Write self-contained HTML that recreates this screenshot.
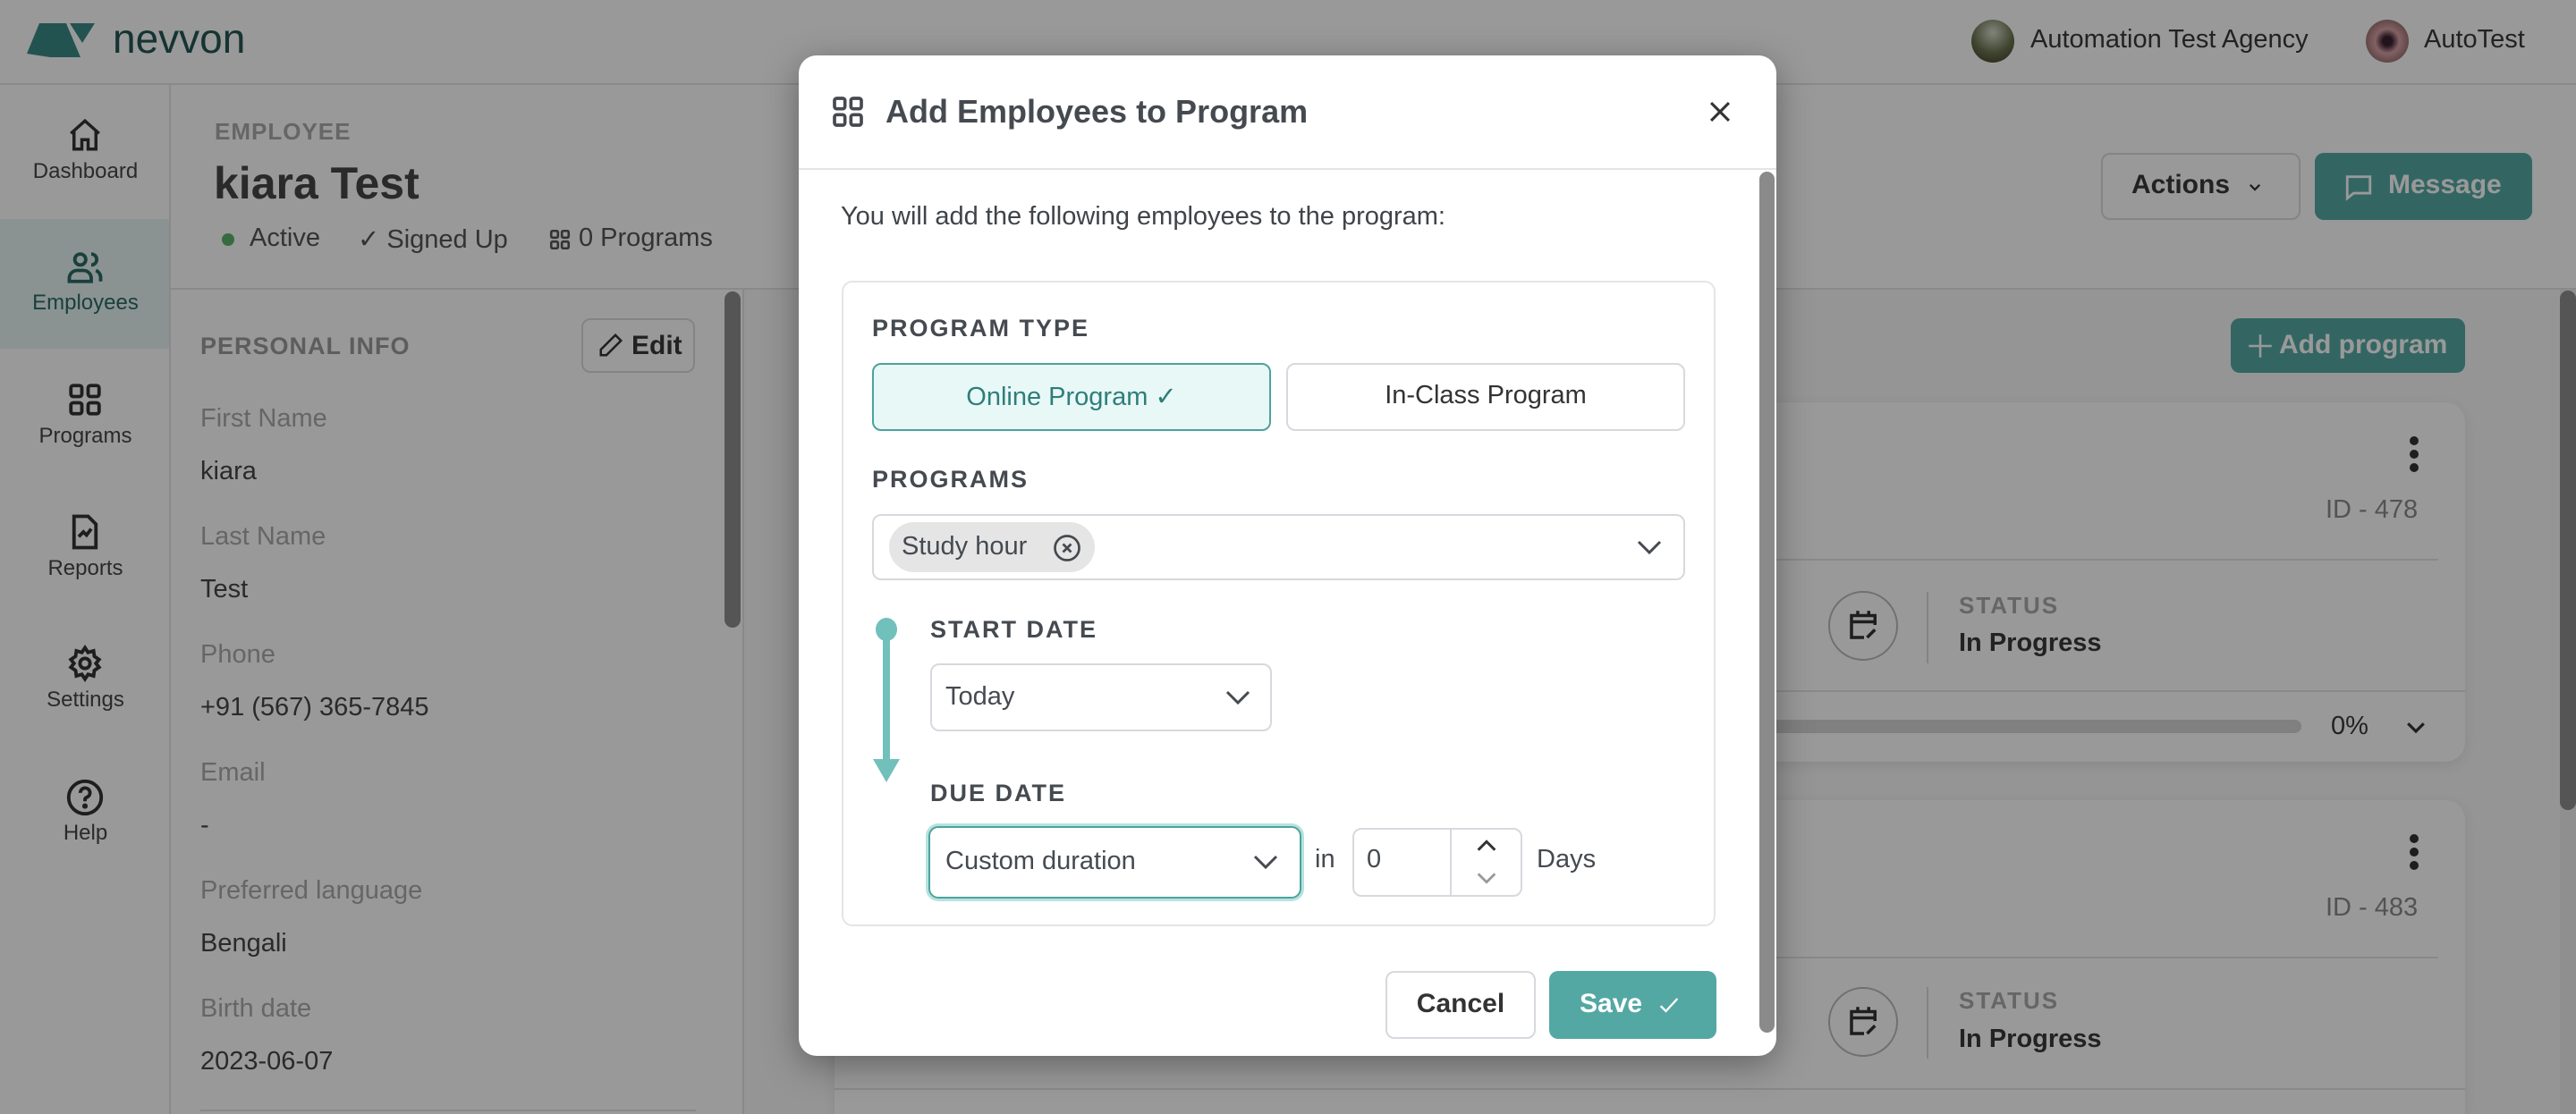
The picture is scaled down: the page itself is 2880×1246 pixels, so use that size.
<!DOCTYPE html>
<html><head><meta charset="utf-8"><style>
*{box-sizing:border-box;margin:0;padding:0}
html{width:2880px;height:1246px;overflow:hidden}
body{width:2880px;height:1246px;overflow:hidden;position:relative;font-family:"Liberation Sans",sans-serif;background:#fff;color:#464646}
.a{position:absolute;white-space:nowrap}
.hdr{left:0;top:0;width:2880px;height:95px;background:#fff;border-bottom:2px solid #e4e4e4}
.side{left:0;top:95px;width:191px;height:1151px;background:#fff;border-right:2px solid #e4e4e4}
.nav{width:191px;text-align:center;font-size:24px;color:#464646;left:0}
.lab{font-size:29px;color:#aaa;left:224px}
.val{font-size:29px;color:#464646;left:224px}
.card{left:933px;width:1823px;background:#fff;border-radius:22px;box-shadow:0 4px 14px rgba(0,0,0,.08)}
.btnb{border:2px solid #ddd;border-radius:10px;background:#fff}
.cap{font-size:27px;font-weight:bold;letter-spacing:2px;color:#454a50}
.sel{border:2px solid #d6d9dd;border-radius:10px;background:#fff}
</style></head><body>
<div class="a hdr"></div>
<svg class="a" style="left:30px;top:26px" width="82" height="40" viewBox="0 0 82 40"><path d="M14 0H44L60 38H26L0 34Z" fill="#3b8a85"/><path d="M48 0H76L62 22Z" fill="#3b8a85"/></svg>
<div class="a" style="left:126px;top:16px;font-size:46px;color:#245854">nevvon</div>
<div class="a" style="left:2204px;top:22px;width:48px;height:48px;border-radius:50%;background:radial-gradient(circle at 50% 30%,#d8dccc,#6b7350 55%,#3d3a22)"></div>
<div class="a" style="left:2270px;top:28px;font-size:29px;color:#3a3a3a">Automation Test Agency</div>
<div class="a" style="left:2645px;top:22px;width:48px;height:48px;border-radius:50%;background:radial-gradient(circle,#3a2030 15%,#d9a3a8 40%,#9a7070 75%,#5a4a40)"></div>
<div class="a" style="left:2710px;top:28px;font-size:29px;color:#3a3a3a">AutoTest</div>
<div class="a side"></div>
<div class="a" style="left:0;top:245px;width:189px;height:145px;background:#e6f5f3"></div>
<svg class="a" style="left:74px;top:130px" width="42" height="42" viewBox="0 0 24 24" fill="none" stroke="#333" stroke-width="2"><path d="M3 11L12 3l9 8M5 9v12h5v-6h4v6h5V9"/></svg>
<div class="a nav" style="top:178px">Dashboard</div>
<svg class="a" style="left:74px;top:278px" width="42" height="42" viewBox="0 0 24 24" fill="none" stroke="#2b6b67" stroke-width="2.2"><circle cx="9" cy="7" r="3.5"/><path d="M2 21v-2a5 5 0 0 1 5-5h4a5 5 0 0 1 5 5v2z"/><path d="M16 3.5a3.5 3.5 0 0 1 0 7M19 14a5 5 0 0 1 3 5v2"/></svg>
<div class="a nav" style="top:325px;color:#2b6b67">Employees</div>
<svg class="a" style="left:74px;top:426px" width="42" height="42" viewBox="0 0 24 24" fill="none" stroke="#333" stroke-width="2.2"><rect x="3" y="3" width="7" height="7" rx="1.5"/><rect x="14" y="3" width="7" height="7" rx="1.5"/><rect x="3" y="14" width="7" height="7" rx="1.5"/><rect x="14" y="14" width="7" height="7" rx="1.5"/></svg>
<div class="a nav" style="top:474px">Programs</div>
<svg class="a" style="left:74px;top:574px" width="42" height="42" viewBox="0 0 24 24" fill="none" stroke="#333" stroke-width="2.2"><path d="M5 2h9l5 5v15H5z"/><path d="M8 15l3-3 2 2 3-4"/></svg>
<div class="a nav" style="top:622px">Reports</div>
<svg class="a" style="left:74px;top:721px" width="42" height="42" viewBox="0 0 24 24" fill="none" stroke="#333" stroke-width="2.2"><circle cx="12" cy="12" r="3.2"/><path d="M12 2l2 3 3.5-1 .5 3.5 3 2-2 2.5 2 2.5-3 2-.5 3.5-3.5-1-2 3-2-3-3.5 1-.5-3.5-3-2 2-2.5-2-2.5 3-2L6.5 4 10 5z"/></svg>
<div class="a nav" style="top:769px">Settings</div>
<svg class="a" style="left:72px;top:869px" width="46" height="46" viewBox="0 0 24 24" fill="none" stroke="#333" stroke-width="2"><circle cx="12" cy="12" r="9.5"/><path d="M9.3 9.3a2.8 2.8 0 1 1 3.7 2.6c-.7.3-1 .8-1 1.5v.8"/><circle cx="12" cy="17" r=".6" fill="#333"/></svg>
<div class="a nav" style="top:918px">Help</div>
<div class="a" style="left:240px;top:132px;font-size:26px;font-weight:bold;color:#aaa;letter-spacing:1px">EMPLOYEE</div>
<div class="a" style="left:239px;top:176px;font-size:50px;font-weight:bold;color:#474747">kiara Test</div>
<div class="a" style="left:248px;top:261px;width:14px;height:14px;border-radius:50%;background:#5cb36a"></div>
<div class="a" style="left:279px;top:250px;font-size:29px;color:#555">Active</div>
<div class="a" style="left:400px;top:250px;font-size:29px;color:#555">✓ Signed Up</div>
<svg class="a" style="left:613px;top:255px" width="26" height="26" viewBox="0 0 24 24" fill="none" stroke="#555" stroke-width="2.4"><rect x="3" y="3" width="7" height="7" rx="1.5"/><rect x="14" y="3" width="7" height="7" rx="1.5"/><rect x="3" y="14" width="7" height="7" rx="1.5"/><rect x="14" y="14" width="7" height="7" rx="1.5"/></svg>
<div class="a" style="left:647px;top:250px;font-size:29px;color:#555">0 Programs</div>
<div class="a btnb" style="left:2349px;top:171px;width:223px;height:75px"></div>
<div class="a" style="left:2383px;top:190px;font-size:30px;font-weight:bold;color:#3a3a3a">Actions</div>
<svg class="a" style="left:2512px;top:200px" width="18" height="18" viewBox="0 0 24 24" fill="none" stroke="#333" stroke-width="3"><path d="M5 9l7 7 7-7"/></svg>
<div class="a" style="left:2588px;top:171px;width:243px;height:75px;background:#55aaa6;border-radius:10px"></div>
<svg class="a" style="left:2620px;top:192px" width="34" height="34" viewBox="0 0 24 24" fill="none" stroke="#fff" stroke-width="2"><path d="M3 4h18v13H8l-5 4z"/></svg>
<div class="a" style="left:2670px;top:190px;font-size:30px;font-weight:bold;color:#fff">Message</div>
<div class="a" style="left:191px;top:322px;width:2689px;height:2px;background:#e4e4e4"></div>
<div class="a" style="left:830px;top:324px;width:2px;height:922px;background:#e4e4e4"></div>
<div class="a" style="left:810px;top:326px;width:18px;height:376px;border-radius:9px;background:#8e8e8e"></div>
<div class="a" style="left:224px;top:372px;font-size:27px;font-weight:bold;color:#9c9c9c;letter-spacing:1px">PERSONAL INFO</div>
<div class="a btnb" style="left:650px;top:356px;width:127px;height:61px"></div>
<svg class="a" style="left:668px;top:371px" width="30" height="30" viewBox="0 0 24 24" fill="none" stroke="#333" stroke-width="2"><path d="M16 3l5 5L8 21H3v-5z"/></svg>
<div class="a" style="left:706px;top:370px;font-size:30px;font-weight:bold;color:#3a3a3a">Edit</div>
<div class="a lab" style="top:452px">First Name</div><div class="a val" style="top:511px">kiara</div>
<div class="a lab" style="top:584px">Last Name</div><div class="a val" style="top:643px">Test</div>
<div class="a lab" style="top:716px">Phone</div><div class="a val" style="top:775px">+91 (567) 365-7845</div>
<div class="a lab" style="top:848px">Email</div><div class="a val" style="top:907px">-</div>
<div class="a lab" style="top:980px">Preferred language</div><div class="a val" style="top:1039px">Bengali</div>
<div class="a lab" style="top:1112px">Birth date</div><div class="a val" style="top:1171px">2023-06-07</div>
<div class="a" style="left:224px;top:1241px;width:554px;height:2px;background:#e4e4e4"></div>
<div class="a" style="left:832px;top:324px;width:2030px;height:922px;background:#f8f8f8"></div>
<div class="a" style="left:2862px;top:324px;width:18px;height:922px;background:#eee"></div>
<div class="a" style="left:2862px;top:325px;width:18px;height:581px;border-radius:9px;background:#8e8e8e"></div>
<div class="a" style="left:2494px;top:356px;width:262px;height:61px;background:#55aaa6;border-radius:10px"></div>
<svg class="a" style="left:2510px;top:370px" width="34" height="34" viewBox="0 0 24 24" fill="none" stroke="#fff" stroke-width="1.8"><path d="M12 3v18M3 12h18"/></svg>
<div class="a" style="left:2548px;top:369px;font-size:30px;font-weight:bold;color:#fff">Add program</div>
<div class="a card" style="top:450px;height:402px"></div>
<div class="a" style="left:2694px;top:488px;width:10px;line-height:0">
<div style="width:10px;height:10px;border-radius:50%;background:#333;margin-bottom:5px"></div><div style="width:10px;height:10px;border-radius:50%;background:#333;margin-bottom:5px"></div><div style="width:10px;height:10px;border-radius:50%;background:#333"></div></div>
<div class="a" style="left:2600px;top:554px;font-size:29px;color:#8a8a8a">ID - 478</div>
<div class="a" style="left:933px;top:625px;width:1793px;height:2px;background:#e4e4e4"></div>
<div class="a" style="left:2044px;top:661px;width:78px;height:78px;border-radius:50%;border:2px solid #bbb"></div>
<svg class="a" style="left:2063px;top:678px" width="42" height="42" viewBox="0 0 24 24" fill="none" stroke="#333" stroke-width="2"><path d="M12 20H4V6h15v6M4 10h15M8 3v4M15 3v4M14 20l5-5"/></svg>
<div class="a" style="left:2154px;top:662px;width:2px;height:80px;background:#ddd"></div>
<div class="a" style="left:2190px;top:662px;font-size:26px;font-weight:bold;color:#aaa;letter-spacing:2px">STATUS</div>
<div class="a" style="left:2190px;top:703px;font-size:29px;font-weight:bold;color:#3a3a3a">In Progress</div>
<div class="a" style="left:933px;top:772px;width:1823px;height:2px;background:#e4e4e4"></div>
<div class="a" style="left:933px;top:805px;width:1640px;height:15px;border-radius:8px;background:#d6d6d6"></div>
<div class="a" style="left:2606px;top:796px;font-size:29px;color:#3a3a3a">0%</div>
<svg class="a" style="left:2686px;top:798px" width="30" height="30" viewBox="0 0 24 24" fill="none" stroke="#333" stroke-width="2.6"><path d="M5 9l7 7 7-7"/></svg>
<div class="a card" style="top:895px;height:351px;border-radius:22px 22px 0 0"></div>
<div class="a" style="left:2694px;top:933px;width:10px;line-height:0">
<div style="width:10px;height:10px;border-radius:50%;background:#333;margin-bottom:5px"></div><div style="width:10px;height:10px;border-radius:50%;background:#333;margin-bottom:5px"></div><div style="width:10px;height:10px;border-radius:50%;background:#333"></div></div>
<div class="a" style="left:2600px;top:999px;font-size:29px;color:#8a8a8a">ID - 483</div>
<div class="a" style="left:933px;top:1070px;width:1793px;height:2px;background:#e4e4e4"></div>
<div class="a" style="left:2044px;top:1104px;width:78px;height:78px;border-radius:50%;border:2px solid #bbb"></div>
<svg class="a" style="left:2063px;top:1121px" width="42" height="42" viewBox="0 0 24 24" fill="none" stroke="#333" stroke-width="2"><path d="M12 20H4V6h15v6M4 10h15M8 3v4M15 3v4M14 20l5-5"/></svg>
<div class="a" style="left:2154px;top:1104px;width:2px;height:80px;background:#ddd"></div>
<div class="a" style="left:2190px;top:1104px;font-size:26px;font-weight:bold;color:#aaa;letter-spacing:2px">STATUS</div>
<div class="a" style="left:2190px;top:1146px;font-size:29px;font-weight:bold;color:#3a3a3a">In Progress</div>
<div class="a" style="left:933px;top:1217px;width:1823px;height:2px;background:#e4e4e4"></div>
<div class="a" style="left:0;top:0;width:2880px;height:1246px;background:rgba(0,0,0,.4)"></div>
<div class="a" style="left:893px;top:62px;width:1093px;height:1119px;background:#fff;border-radius:20px;box-shadow:0 10px 40px rgba(0,0,0,.35);overflow:hidden">
<div class="a" style="left:0;top:126px;width:1093px;height:2px;background:#e2e4e6"></div>
<div class="a" style="left:1074px;top:130px;width:17px;height:963px;border-radius:9px;background:#8a8a8a"></div>
</div>
<svg class="a" style="left:928px;top:105px" width="40" height="40" viewBox="0 0 24 24" fill="none" stroke="#454a50" stroke-width="2.2"><rect x="3" y="3" width="7" height="7" rx="1.5"/><rect x="14" y="3" width="7" height="7" rx="1.5"/><rect x="3" y="14" width="7" height="7" rx="1.5"/><rect x="14" y="14" width="7" height="7" rx="1.5"/></svg>
<div class="a" style="left:990px;top:104px;font-size:36px;font-weight:bold;color:#454a50">Add Employees to Program</div>
<svg class="a" style="left:1906px;top:108px" width="34" height="34" viewBox="0 0 24 24" fill="none" stroke="#333" stroke-width="2.2"><path d="M5 5l14 14M19 5L5 19"/></svg>
<div class="a" style="left:940px;top:226px;font-size:29px;color:#3f4449">You will add the following employees to the program:</div>
<div class="a" style="left:941px;top:314px;width:977px;height:722px;border:2px solid #e3e5e8;border-radius:12px"></div>
<div class="a cap" style="left:975px;top:352px">PROGRAM TYPE</div>
<div class="a" style="left:975px;top:406px;width:446px;height:76px;border:2px solid #4da29d;border-radius:10px;background:#e8f8f7"></div>
<div class="a" style="left:975px;top:426px;width:446px;text-align:center;font-size:29px;color:#2e7e7a">Online Program ✓</div>
<div class="a sel" style="left:1438px;top:406px;width:446px;height:76px"></div>
<div class="a" style="left:1438px;top:426px;width:446px;text-align:center;font-size:29px;color:#333">In-Class Program</div>
<div class="a cap" style="left:975px;top:521px">PROGRAMS</div>
<div class="a sel" style="left:975px;top:575px;width:909px;height:74px"></div>
<div class="a" style="left:994px;top:584px;width:230px;height:56px;border-radius:28px;background:#e5e5e5"></div>
<div class="a" style="left:1008px;top:595px;font-size:29px;color:#454a50">Study hour</div>
<svg class="a" style="left:1175px;top:595px" width="36" height="36" viewBox="0 0 24 24" fill="none" stroke="#454a50" stroke-width="1.8"><circle cx="12" cy="12" r="9"/><path d="M9 9l6 6M15 9l-6 6"/></svg>
<svg class="a" style="left:1826px;top:594px" width="36" height="36" viewBox="0 0 24 24" fill="none" stroke="#454a50" stroke-width="2"><path d="M4 8l8 8 8-8"/></svg>
<svg class="a" style="left:974px;top:689px" width="34" height="190" viewBox="0 0 34 190"><ellipse cx="17" cy="15" rx="12" ry="13" fill="#72c0bb"/><rect x="13" y="15" width="8" height="150" fill="#72c0bb"/><path d="M2 160H32L17 186Z" fill="#72c0bb"/></svg>
<div class="a cap" style="left:1040px;top:689px">START DATE</div>
<div class="a sel" style="left:1040px;top:742px;width:382px;height:76px"></div>
<div class="a" style="left:1057px;top:763px;font-size:29px;color:#454a50">Today</div>
<svg class="a" style="left:1366px;top:762px" width="36" height="36" viewBox="0 0 24 24" fill="none" stroke="#454a50" stroke-width="2"><path d="M4 8l8 8 8-8"/></svg>
<div class="a cap" style="left:1040px;top:872px">DUE DATE</div>
<div class="a" style="left:1038px;top:924px;width:417px;height:81px;border:2px solid #4da29d;border-radius:11px;box-shadow:0 0 0 3px #b5e3df"></div>
<div class="a" style="left:1057px;top:947px;font-size:29px;color:#454a50">Custom duration</div>
<svg class="a" style="left:1397px;top:946px" width="36" height="36" viewBox="0 0 24 24" fill="none" stroke="#454a50" stroke-width="2"><path d="M4 8l8 8 8-8"/></svg>
<div class="a" style="left:1470px;top:945px;font-size:29px;color:#454a50">in</div>
<div class="a sel" style="left:1512px;top:926px;width:190px;height:77px"></div>
<div class="a" style="left:1621px;top:927px;width:2px;height:75px;background:#d6d9dd"></div>
<div class="a" style="left:1528px;top:945px;font-size:29px;color:#454a50">0</div>
<svg class="a" style="left:1648px;top:934px" width="28" height="24" viewBox="0 0 24 20" fill="none" stroke="#333" stroke-width="2.6"><path d="M4 14l8-8 8 8"/></svg>
<svg class="a" style="left:1648px;top:970px" width="28" height="24" viewBox="0 0 24 20" fill="none" stroke="#999" stroke-width="2.4"><path d="M4 6l8 8 8-8"/></svg>
<div class="a" style="left:1718px;top:945px;font-size:29px;color:#454a50">Days</div>
<div class="a sel" style="left:1549px;top:1086px;width:168px;height:76px"></div>
<div class="a" style="left:1549px;top:1106px;width:168px;text-align:center;font-size:30px;font-weight:bold;color:#333">Cancel</div>
<div class="a" style="left:1732px;top:1086px;width:187px;height:76px;border-radius:10px;background:#54a8a4"></div>
<div class="a" style="left:1766px;top:1106px;font-size:30px;font-weight:bold;color:#fff">Save</div>
<svg class="a" style="left:1852px;top:1110px" width="28" height="28" viewBox="0 0 24 24" fill="none" stroke="#fff" stroke-width="2"><path d="M4 13l5 5L20 6"/></svg>
</body></html>
